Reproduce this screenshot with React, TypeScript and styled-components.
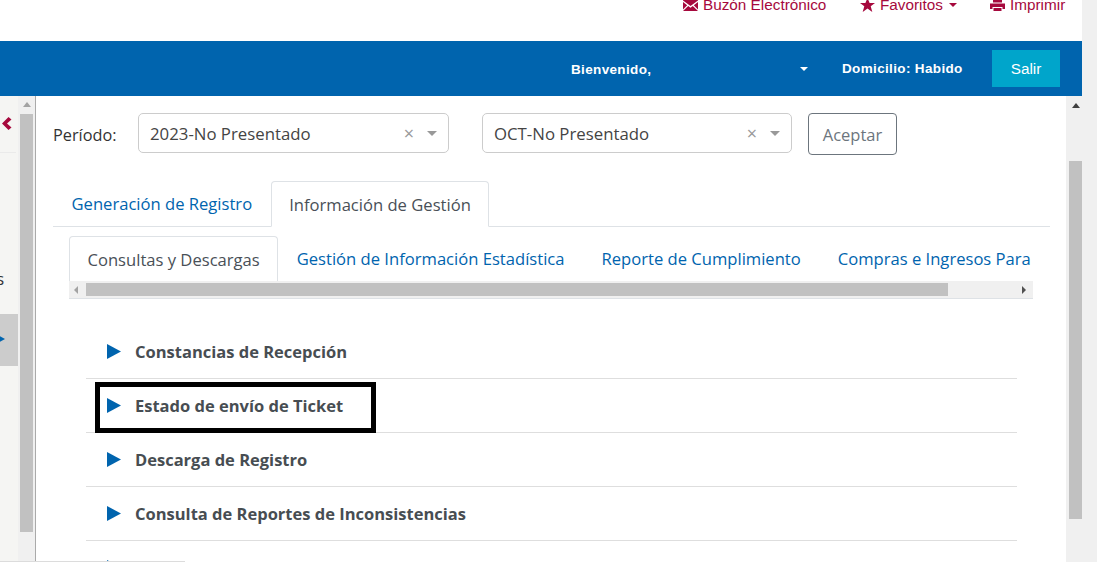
import React from 'react';
import styled, { createGlobalStyle } from 'styled-components';

const GlobalStyle = createGlobalStyle`
  html, body {
    margin: 0;
    padding: 0;
    height: 562px;
    overflow: hidden;
    background: #fff;
  }
  * { box-sizing: border-box; }
`;

const Shell = styled.div`
  position: relative;
  display: flex;
  width: 1097px;
  height: 562px;
  overflow: hidden;
  font-family: "Open Sans", "Noto Sans", sans-serif;
  color: #495057;
`;

const Page = styled.div`
  width: 1082px;
  display: flex;
  flex-direction: column;
`;

const WindowEdge = styled.div`
  width: 15px;
  background: #f0f0f0;
`;

const TopLinks = styled.div`
  height: 41px;
  overflow: hidden;
  display: flex;
  font-family: "Liberation Sans", Arial, sans-serif;
  font-size: 15.3px;
  line-height: 20px;
  color: #a6093d;
  padding-left: 683px;
`;

const TopLink = styled.div<{ $width: number }>`
  width: ${p => p.$width}px;
  margin-top: -5px;
  display: flex;
  align-items: center;
  flex: none;
  height: 20px;
  white-space: nowrap;
  svg { flex: none; margin-right: 5px; }
`;

const Caret = styled.span<{ $color?: string; $size?: number }>`
  display: inline-block;
  width: 0;
  height: 0;
  border-left: ${p => p.$size ?? 4}px solid transparent;
  border-right: ${p => p.$size ?? 4}px solid transparent;
  border-top: ${p => p.$size ?? 4}px solid ${p => p.$color ?? 'currentColor'};
`;

const LinkCaret = styled(Caret)`
  margin-left: 6px;
`;

const BlueBar = styled.div`
  height: 55px;
  flex: none;
  background: #0064ae;
  display: flex;
  align-items: center;
  justify-content: flex-end;
  padding-right: 22px;
  color: #fff;
  font-family: "Liberation Sans", Arial, sans-serif;
`;

const Welcome = styled.div`
  width: 237px;
  display: flex;
  align-items: center;
  justify-content: space-between;
  font-size: 13.5px;
  font-weight: bold;
  letter-spacing: 0.35px;
  margin-right: 34px;
  margin-top: 1px;
`;

const Domicile = styled.div`
  width: 121px;
  font-size: 13.5px;
  font-weight: bold;
  letter-spacing: 0.35px;
  white-space: nowrap;
  margin-right: 29px;
`;

const ExitButton = styled.div`
  width: 68px;
  height: 37px;
  background: #00a5cb;
  font-size: 15.3px;
  display: flex;
  align-items: center;
  justify-content: center;
`;

const Body = styled.div`
  flex: 1;
  min-height: 0;
  display: flex;
`;

const SideMenu = styled.div`
  width: 18px;
  flex: none;
  background: #f5f5f3;
  display: flex;
  flex-direction: column;
  overflow: hidden;
  color: #333;
`;

const CollapseRow = styled.div`
  height: 57px;
  flex: none;
  width: 16px;
  border-bottom: 1px solid #eaeaea;
  display: flex;
  align-items: flex-start;
  justify-content: flex-end;
  padding-top: 21px;
  padding-right: 4px;
`;

const SideLabel = styled.div`
  margin-top: 115px;
  height: 22px;
  font-size: 16px;
  line-height: 22px;
  display: flex;
  justify-content: flex-end;
  white-space: nowrap;
  padding-right: 14px;
`;

const SideItem = styled.div`
  margin-top: 24px;
  height: 52px;
  background: #ccc;
  display: flex;
  align-items: center;
  svg { margin-left: -4px; margin-bottom: 2px; }
`;

const SideScroll = styled.div`
  width: 18px;
  flex: none;
  background: #f0f0f0;
  border-right: 1px solid #aaa;
  display: flex;
  flex-direction: column;
  align-items: flex-start;
  padding-left: 2px;
`;

const ArrowUp = styled.span`
  width: 0;
  height: 0;
  border-left: 4px solid transparent;
  border-right: 4px solid transparent;
  border-bottom: 5px solid #a3a3a3;
  margin: 6px 0 7px 3px;
`;

const SideThumb = styled.div`
  width: 13px;
  height: 418px;
  background: #c1c1c1;
`;

const Main = styled.div`
  width: 1030px;
  flex: none;
  padding: 17px 16px 0 17px;
  overflow: hidden;
`;

const PeriodRow = styled.div`
  display: flex;
  align-items: flex-start;
  height: 68px;
`;

const PeriodLabel = styled.div`
  width: 85px;
  font-size: 16.3px;
  line-height: 44px;
  color: #333;
`;

const SelectBox = styled.div<{ $width: number; $gap: number }>`
  width: ${p => p.$width}px;
  height: 40px;
  border: 1px solid #ccc;
  border-radius: 5px;
  display: flex;
  align-items: center;
  padding: 0 11px;
  font-size: 16.8px;
  color: #444;
  margin-right: ${p => p.$gap}px;
`;

const SelectValue = styled.span`
  flex: 1;
`;

const ClearMark = styled.span`
  color: #999;
  font-size: 18px;
  margin-right: 13px;
  line-height: 1;
`;

const AcceptButton = styled.div`
  width: 89px;
  height: 42px;
  border: 1px solid #6c757d;
  border-radius: 4px;
  color: #6c757d;
  font-size: 16.5px;
  display: flex;
  align-items: center;
  justify-content: center;
`;

const MainTabs = styled.div`
  display: flex;
  height: 46px;
  border-bottom: 1px solid #dee2e6;
  width: 997px;
`;

const Tab = styled.div<{ $active?: boolean }>`
  flex: none;
  height: ${p => (p.$active ? '46px' : '45px')};
  padding: 0 17.5px;
  display: flex;
  align-items: center;
  font-size: 16.6px;
  white-space: nowrap;
  border: 1px solid ${p => (p.$active ? '#dee2e6' : 'transparent')};
  border-bottom-color: ${p => (p.$active ? '#fff' : 'transparent')};
  border-radius: 4px 4px 0 0;
  color: ${p => (p.$active ? '#495057' : '#0064ae')};
  background: #fff;
`;

const SubTabsArea = styled.div`
  width: 964px;
  margin: 9px 0 0 16px;
`;

const SubTabs = styled.div`
  display: flex;
  height: 45px;
  overflow: hidden;
`;

const HScroll = styled.div`
  height: 18px;
  background: #f0f0f0;
  border-bottom: 1px solid #dee2e6;
  display: flex;
  align-items: center;
  padding-left: 5px;
`;

const ArrowLeft = styled.span`
  width: 0;
  height: 0;
  border-top: 4px solid transparent;
  border-bottom: 4px solid transparent;
  border-right: 4px solid #a3a3a3;
  margin-right: 8px;
`;

const ArrowRight = styled.span`
  width: 0;
  height: 0;
  border-top: 4px solid transparent;
  border-bottom: 4px solid transparent;
  border-left: 4px solid #505050;
  margin-left: 74px;
`;

const HThumb = styled.div`
  width: 862px;
  height: 13px;
  background: #c1c1c1;
`;

const Accordion = styled.div`
  width: 931px;
  margin: 26px 0 0 33px;
`;

const Row = styled.div`
  position: relative;
  height: 54px;
  border-bottom: 1px solid #dedede;
  display: flex;
  align-items: center;
  padding-left: 21px;
  font-size: 16.5px;
  font-weight: 700;
  color: #474d52;
  svg { margin-right: 14px; flex: none; }
`;

const RowLabel = styled.span`
  margin-bottom: 1px;
  white-space: nowrap;
`;

const Highlight = styled.div`
  position: absolute;
  left: 9px;
  top: 3px;
  width: 281px;
  height: 51px;
  border: 5px solid #000;
`;

const PageScroll = styled.div`
  width: 16px;
  flex: none;
  background: #f0f0f0;
  display: flex;
  flex-direction: column;
  align-items: center;
  padding-left: 3px;
`;

const ArrowUpDark = styled(ArrowUp)`
  border-bottom-color: #404040;
  margin: 7px 0 53px 0;
`;

const PageThumb = styled.div`
  width: 13px;
  height: 358px;
  background: #c1c1c1;
`;

const BottomEdge = styled.div`
  position: absolute;
  left: 0;
  bottom: 0;
  width: 185px;
  height: 1px;
  background: #dcdcdc;
`;

const rows = [
  'Constancias de Recepción',
  'Estado de envío de Ticket',
  'Descarga de Registro',
  'Consulta de Reportes de Inconsistencias',
  'Reportes de SAF',
];

const subTabs = [
  'Gestión de Información Estadística',
  'Reporte de Cumplimiento',
  'Compras e Ingresos Para',
];

const MailIcon = () => (
  <svg width="15" height="12" viewBox="0 0 15 12">
    <path d="M0 0h15v1.5L7.5 7 0 1.5zM0 3l4.2 3.2L0 10.4zM15 3v7.4l-4.2-4.2zM5.2 7l2.3 1.7L9.8 7l5.2 5H0z" fill="#a6093d" />
  </svg>
);

const StarIcon = () => (
  <svg width="15" height="14" viewBox="0 0 15 14">
    <path d="M7.5 0l2.1 5h5.4l-4.3 3.3L12.3 14 7.5 10.6 2.7 14l1.6-5.7L0 5h5.4z" fill="#a6093d" />
  </svg>
);

const PrintIcon = () => (
  <svg width="15" height="12" viewBox="0 0 15 12">
    <path d="M3 0h9v3.5H3zM0 4.5h15V10h-2.5V8h-10v2H0zM3.5 9h8v3h-8z" fill="#a6093d" />
  </svg>
);

const BlueTriangle = () => (
  <svg width="14" height="15" viewBox="0 0 14 15">
    <path d="M0 0l14 7.5L0 15z" fill="#0064ae" />
  </svg>
);

const App: React.FC = () => (
  <Shell>
    <GlobalStyle />
    <Page>
      <TopLinks>
        <TopLink $width={177}><MailIcon />Buzón Electrónico</TopLink>
        <TopLink $width={130}>
          <StarIcon />Favoritos<LinkCaret />
        </TopLink>
        <TopLink $width={90}><PrintIcon />Imprimir</TopLink>
      </TopLinks>
      <BlueBar>
        <Welcome>Bienvenido,<Caret /></Welcome>
        <Domicile>Domicilio: Habido</Domicile>
        <ExitButton>Salir</ExitButton>
      </BlueBar>
      <Body>
        <SideMenu>
          <CollapseRow>
            <svg width="10" height="13" viewBox="0 0 10 13">
              <path d="M6.5 0L9.5 2.5 5 6.5l4.5 4L6.5 13 0 6.5z" fill="#a6093d" />
            </svg>
          </CollapseRow>
          <SideLabel>Opciones</SideLabel>
          <SideItem>
            <svg width="9" height="10" viewBox="0 0 9 10">
              <path d="M0 0l9 5-9 5z" fill="#0064ae" />
            </svg>
          </SideItem>
        </SideMenu>
        <SideScroll>
          <ArrowUp />
          <SideThumb />
        </SideScroll>
        <Main>
          <PeriodRow>
            <PeriodLabel>Período:</PeriodLabel>
            <SelectBox $width={311} $gap={33}>
              <SelectValue>2023-No Presentado</SelectValue>
              <ClearMark>×</ClearMark>
              <Caret $color="#999" $size={5} />
            </SelectBox>
            <SelectBox $width={310} $gap={16}>
              <SelectValue>OCT-No Presentado</SelectValue>
              <ClearMark>×</ClearMark>
              <Caret $color="#999" $size={5} />
            </SelectBox>
            <AcceptButton>Aceptar</AcceptButton>
          </PeriodRow>
          <MainTabs>
            <Tab>Generación de Registro</Tab>
            <Tab $active>Información de Gestión</Tab>
          </MainTabs>
          <SubTabsArea>
            <SubTabs>
              <Tab $active>Consultas y Descargas</Tab>
              {subTabs.map(t => <Tab key={t}>{t}</Tab>)}
            </SubTabs>
            <HScroll>
              <ArrowLeft />
              <HThumb />
              <ArrowRight />
            </HScroll>
          </SubTabsArea>
          <Accordion>
            {rows.map((r, i) => (
              <Row key={r}>
                <BlueTriangle />
                <RowLabel>{r}</RowLabel>
                {i === 1 && <Highlight />}
              </Row>
            ))}
          </Accordion>
        </Main>
        <PageScroll>
          <ArrowUpDark />
          <PageThumb />
        </PageScroll>
      </Body>
    </Page>
    <WindowEdge />
    <BottomEdge />
  </Shell>
);

export default App;
